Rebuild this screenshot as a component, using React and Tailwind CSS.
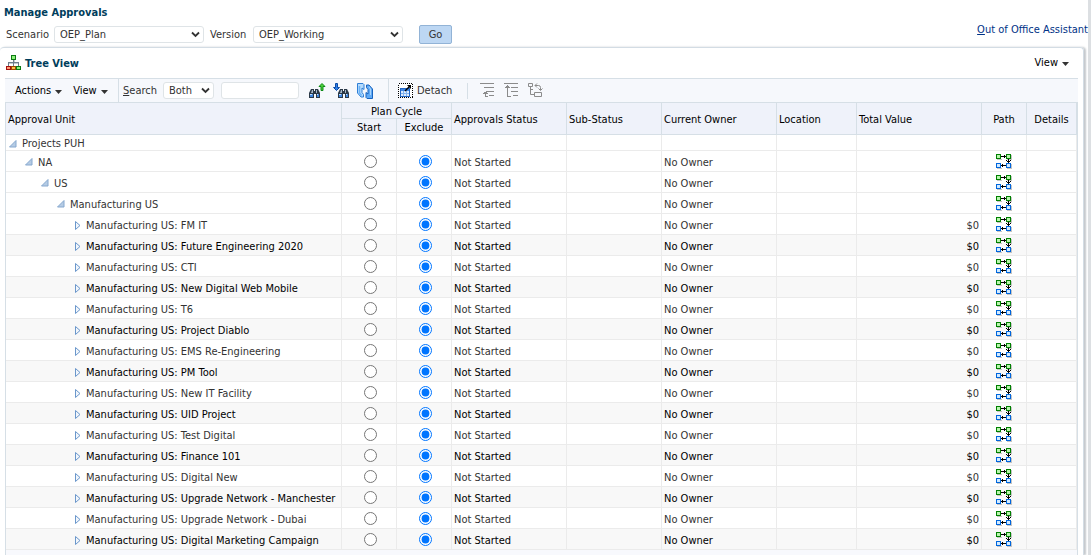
import React, { useState } from 'react'

const columns = [
  { label: 'Approvals Status', width: 'w-[115px]' },
  { label: 'Sub-Status', width: 'w-[95px]' },
  { label: 'Current Owner', width: 'w-[115px]' },
  { label: 'Location', width: 'w-[80px]' },
  { label: 'Total Value', width: 'w-[125px]' },
]

const units = [
  { name: 'Projects PUH', level: 0 },
  { name: 'NA', level: 1 },
  { name: 'US', level: 2 },
  { name: 'Manufacturing US', level: 3 },
  { name: 'Manufacturing US: FM IT', level: 4 },
  { name: 'Manufacturing US: Future Engineering 2020', level: 4 },
  { name: 'Manufacturing US: CTI', level: 4 },
  { name: 'Manufacturing US: New Digital Web Mobile', level: 4 },
  { name: 'Manufacturing US: T6', level: 4 },
  { name: 'Manufacturing US: Project Diablo', level: 4 },
  { name: 'Manufacturing US: EMS Re-Engineering', level: 4 },
  { name: 'Manufacturing US: PM Tool', level: 4 },
  { name: 'Manufacturing US: New IT Facility', level: 4 },
  { name: 'Manufacturing US: UID Project', level: 4 },
  { name: 'Manufacturing US: Test Digital', level: 4 },
  { name: 'Manufacturing US: Finance 101', level: 4 },
  { name: 'Manufacturing US: Digital New', level: 4 },
  { name: 'Manufacturing US: Upgrade Network - Manchester', level: 4 },
  { name: 'Manufacturing US: Upgrade Network - Dubai', level: 4 },
  { name: 'Manufacturing US: Digital Marketing Campaign', level: 4 },
]

const indents = ['pl-[3px]', 'pl-[19px]', 'pl-[35px]', 'pl-[51px]', 'pl-[67px]']

const TreeIcon = () => (
  <svg width="15" height="16" viewBox="0 0 15 16" shapeRendering="crispEdges" aria-hidden="true">
    <path d="M7 5h1v6H7zM2 7h11v1H2zM2 8h1v3H2zM12 8h1v3h-1z" fill="#6d7d8b" />
    <path d="M8 5h1v2H8zM3 8h4v1H3zM8 8h4v1H8z" fill="#c3cad0" />
    <path d="M5 0h5v5H5z" fill="#0b7a12" />
    <path d="M6 1h3v3H6z" fill="#8df07a" />
    <path d="M0 11h5v4H0z" fill="#a30f0f" />
    <path d="M1 12h3v2H1z" fill="#ff9a6e" />
    <path d="M5 11h5v4H5z" fill="#9a4b00" />
    <path d="M6 12h3v2H6z" fill="#ffc04d" />
    <path d="M10 11h5v4h-5z" fill="#0b7a12" />
    <path d="M11 12h3v2h-3z" fill="#8df07a" />
  </svg>
)

const Binoculars = () => (
  <g>
    <path d="M2 6h3v2h1V6h3l2 4v5H7v-4H5v4H0v-5z" fill="#2b3948" />
    <path d="M3 7h1v3H2zM7 7h1v3H7z" fill="#a9b9c9" />
    <path d="M1 11h3v3H1zM8 11h2v3H8z" fill="#3f86e0" />
    <path d="M1 11h2v1H1zM8 11h1v1H8z" fill="#bfe0ff" />
  </g>
)

const FindPreviousIcon = () => (
  <svg width="17" height="16" viewBox="0 0 17 16" aria-hidden="true">
    <Binoculars />
    <path d="M13 0.500l3 3h-2v4h-2v-4h-2z" fill="#4ed13a" stroke="#0c8a17" />
  </svg>
)

const FindNextIcon = () => (
  <svg width="17" height="16" viewBox="0 0 17 16" aria-hidden="true">
    <g transform="translate(5 0)">
      <Binoculars />
    </g>
    <path d="M3.500 7.500L0.500 4.500h2v-4h2v4h2z" fill="#2f7fe8" stroke="#0a4aa6" />
  </svg>
)

const RefreshIcon = () => (
  <svg width="16" height="16" viewBox="0 0 16 16" aria-hidden="true">
    <path d="M0.500 0.500h5.500l1 1v5L5 5v4.500l1.500 2v2.500H4L0.500 10z" fill="#b5dbfd" stroke="#2f7fd6" />
    <path d="M2.500 3v7l2 2.500" fill="none" stroke="#6db3f7" strokeWidth="1.500" />
    <path d="M15.500 15.500H10l-1-1v-5l2 1.500V6.500l-1.500-2V2H12l3.500 4z" fill="#5fa9f5" stroke="#1763bf" />
    <path d="M12 3.500l1.500 2.500v6" fill="none" stroke="#a9d4fc" />
  </svg>
)

const DetachIcon = () => (
  <svg width="15" height="15" viewBox="0 0 15 15" aria-hidden="true">
    <rect x="0.500" y="0.500" width="14" height="14" fill="#fff" stroke="#000" strokeDasharray="1 1" shapeRendering="crispEdges" />
    <rect x="2.500" y="5.500" width="9" height="8" fill="#dcebfd" stroke="#2266c4" />
    <path d="M3 6h8v2H3z" fill="#3d86e6" />
    <path d="M5.500 8v5M8.500 8v5M3 10.500h8" stroke="#7fb2f0" />
    <path d="M7 8l5-5" stroke="#000" strokeWidth="1.500" />
    <path d="M9 2h4v4z" fill="#000" />
  </svg>
)

const GoUpIcon = () => (
  <svg width="15" height="15" viewBox="0 0 15 15" fill="none" stroke="#8b8b8b" shapeRendering="crispEdges" aria-hidden="true">
    <path d="M0 0.500h14M4 4.500h10M6 8.500h8M9 12.500h5M5.500 9v5M5 13.500h3" />
    <path d="M3 10.500h5M4 9.500h3" />
  </svg>
)

const GoToTopIcon = () => (
  <svg width="15" height="15" viewBox="0 0 15 15" fill="none" stroke="#8b8b8b" shapeRendering="crispEdges" aria-hidden="true">
    <path d="M0 0.500h14M7 4.500h7M7 8.500h7M9 12.500h5M3.500 2v12M3 13.500h4" />
    <path d="M1 4.500h5M2 3.500h3" />
  </svg>
)

const ShowAsTopIcon = () => (
  <svg width="15" height="15" viewBox="0 0 15 15" fill="none" stroke="#8b8b8b" aria-hidden="true">
    <path d="M0.500 0.500h4v3h-4zM6.500 9.500h7v4h-7zM2.500 4v7.500H6M2.500 6.500H5" />
    <path d="M7 2.500h3.500q2 0 2 2V7M9 0.500l-2 2 2 2M10.500 5.500l2 2 2-2" />
  </svg>
)

const PathIcon = () => (
  <svg width="16" height="16" viewBox="0 0 16 16" shapeRendering="crispEdges" aria-hidden="true">
    <path d="M1 5h5v1H1zM11 5h5v1h-5zM15 1h1v4h-1zM1 14h5v1H1zM11 14h5v1h-5zM15 10h1v4h-1z" fill="#c4c4c4" />
    <path d="M0 0h5v5H0zM10 0h5v5h-5z" fill="#008000" />
    <path d="M1 1h3v3H1zM11 1h3v3h-3z" fill="#b9f5ae" />
    <path d="M0 9h5v5H0zM10 9h5v5h-5z" fill="#0066dd" />
    <path d="M1 10h3v3H1zM11 10h3v3h-3z" fill="#d2eaff" />
    <path d="M5 2h5v1H5zM8 1h1v3H8zM12 5h1v4h-1zM11 7h3v1h-3zM10 6h1v1h-1zM14 6h1v1h-1zM5 11h5v1H5zM6 10h1v3H6z" fill="#000" />
  </svg>
)

const ExpandedIcon = () => (
  <svg width="8" height="8" viewBox="0 0 8 8" aria-hidden="true">
    <path d="M7 0.500V7H0.500z" fill="#b5cbe4" stroke="#86a8cf" />
  </svg>
)

const CollapsedIcon = () => (
  <svg width="8" height="9" viewBox="0 0 8 9" aria-hidden="true">
    <path d="M2.500 0.500v8l4.500-4z" fill="#f1f6fc" stroke="#6b97cb" />
  </svg>
)

const MenuButton = ({ children }) => (
  <button type="button" className="flex items-center gap-1 text-black">
    {children}
    <svg width="7" height="4" viewBox="0 0 7 4" className="mt-[2px]" aria-hidden="true">
      <path d="M0 0h7L3.500 4z" fill="#333" />
    </svg>
  </button>
)

const Select = ({ id, label, options, className }) => (
  <div className="relative flex">
    <select
      id={id}
      aria-label={label}
      className={`h-[17px] appearance-none rounded-[3px] border border-[#dfe4e7] bg-white pl-[5px] text-[#333] ${className}`}
    >
      {options.map((option) => (
        <option key={option}>{option}</option>
      ))}
    </select>
    <svg className="pointer-events-none absolute right-1 top-[5px]" width="9" height="7" viewBox="0 0 9 7" aria-hidden="true">
      <path d="M1 1.500l3.500 3.500L8 1.500" fill="none" stroke="#333" strokeWidth="1.800" />
    </svg>
  </div>
)

const headCell = 'border-b border-r border-[#d6dfe6] p-0 pt-[2px] font-normal'
const cell = 'border-b border-r border-[#ebebeb] p-0 pt-[2px]'

const UnitRow = ({ unit, index }) => {
  const [cycle, setCycle] = useState('exclude')
  const [open, setOpen] = useState(unit.level < 4)
  const isRoot = unit.level === 0
  const isShaded = unit.level === 4 && index % 2 === 1

  return (
    <tr className={`${isRoot ? 'h-4' : 'h-[21px]'} ${isShaded ? 'bg-[#f8f8f8] text-black' : 'text-[#333]'}`}>
      <td className={`${cell} ${indents[unit.level]}`}>
        <div className="flex items-center">
          <button type="button" aria-label={`Toggle ${unit.name}`} className="mr-[5px]" onClick={() => setOpen(!open)}>
            {open ? <ExpandedIcon /> : <CollapsedIcon />}
          </button>
          <span className="whitespace-nowrap">{unit.name}</span>
        </div>
      </td>
      {['start', 'exclude'].map((value) => (
        <td key={value} className="border-b border-r border-[#ebebeb] p-0 pl-[2px]">
          {!isRoot && (
            <input
              type="radio"
              name={`cycle-${index}`}
              aria-label={`${value} ${unit.name}`}
              checked={cycle === value}
              onChange={() => setCycle(value)}
              className="mx-auto block size-[13px]"
            />
          )}
        </td>
      ))}
      <td className={`${cell} pl-[2px]`}>{!isRoot && 'Not Started'}</td>
      <td className={cell} />
      <td className={`${cell} pl-[2px]`}>{!isRoot && 'No Owner'}</td>
      <td className={cell} />
      <td className={`${cell} pr-[2px] text-right`}>{unit.level === 4 && '$0'}</td>
      <td className={cell}>
        {!isRoot && (
          <button type="button" aria-label={`Path for ${unit.name}`} className="mx-auto block">
            <PathIcon />
          </button>
        )}
      </td>
      <td className={cell} />
    </tr>
  )
}

const App = () => {
  return (
    <div className="flex min-h-screen flex-col border-r-[3px] border-[#dcdfe2] bg-white font-['DejaVu_Sans_Condensed','Noto_Sans',sans-serif] text-[11px] leading-[14px] text-[#333]">
      <h1 className="px-1 pt-[6px] font-bold text-[#003d5b]">Manage Approvals</h1>

      {/* Scenario and version filters */}
      <div className="flex h-[27px] items-center pl-[6px] pt-[2px]">
        <label htmlFor="scenario" className="w-12">Scenario</label>
        <Select id="scenario" options={['OEP_Plan']} className="w-[150px]" />
        <label htmlFor="version" className="ml-[6px] w-[43px]">Version</label>
        <Select id="version" options={['OEP_Working']} className="w-[150px]" />
        <button type="button" className="ml-4 h-[19px] w-[33px] rounded-[2px] border border-[#92b3d6] bg-[#bdd7f3]">Go</button>
        <a href="#assistant" className="mb-[10px] ml-auto text-[#003286]">
          <span className="underline">O</span>ut of Office Assistant
        </a>
      </div>

      {/* Tree view panel */}
      <section className="mr-1 flex grow flex-col rounded-t border-r border-t border-[#d3dce4] pl-[5px] pr-[5px] shadow-[2px_0_2px_#c4c8cc]">
        <div className="flex h-[30px] items-center gap-1 pl-px">
          <TreeIcon />
          <h2 className="pt-[2px] font-bold text-[#003d5b]">Tree View</h2>
          <div className="ml-auto mr-[9px]">
            <MenuButton>View</MenuButton>
          </div>
        </div>

        <div className="flex h-6 items-center border-t border-[#d6dfe6] bg-[#f6f8fc]">
          <div className="flex w-[113px] gap-[11px] pl-[10px]">
            <MenuButton>Actions</MenuButton>
            <MenuButton>View</MenuButton>
          </div>
          <div className="flex h-full items-center border-l border-[#d6dfe6] pl-1">
            <label htmlFor="search" className="w-10"><span className="underline">S</span>earch</label>
            <Select label="Search in" options={['Both']} className="w-[51px]" />
            <input id="search" type="text" className="ml-[7px] h-[17px] w-[78px] rounded-[3px] border border-[#dfe4e7] bg-white px-1" />
            <button type="button" aria-label="Find previous" className="ml-[10px]"><FindPreviousIcon /></button>
            <button type="button" aria-label="Find next" className="ml-[7px]"><FindNextIcon /></button>
            <button type="button" aria-label="Refresh" className="ml-[7px]"><RefreshIcon /></button>
          </div>
          <div className="ml-[15px] flex h-full items-center border-l border-[#d6dfe6] pl-[9px]">
            <button type="button" className="flex items-center gap-1"><DetachIcon />Detach</button>
            <div className="ml-[15px] flex h-4 items-center gap-[9px] border-l border-[#d6dfe6] pl-3">
              <button type="button" aria-label="Go up"><GoUpIcon /></button>
              <button type="button" aria-label="Go to top"><GoToTopIcon /></button>
              <button type="button" aria-label="Show as top"><ShowAsTopIcon /></button>
            </div>
          </div>
        </div>

        <div className="grow border border-b-0 border-[#d6dfe6] bg-[#f8f9fd]">
          <table className="w-full table-fixed border-separate border-spacing-0 bg-white leading-[13px]">
            <colgroup>
              <col />
              <col className="w-[55px]" />
              <col className="w-[55px]" />
              {columns.map((column) => (
                <col key={column.label} className={column.width} />
              ))}
              <col className="w-[45px]" />
              <col className="w-[50px]" />
            </colgroup>
            <thead className="bg-[#eff2fa] text-black">
              <tr className="h-4">
                <th rowSpan={2} className={`${headCell} pl-[2px] text-left`}>Approval Unit</th>
                <th colSpan={2} className={headCell}>Plan Cycle</th>
                {columns.map((column) => (
                  <th key={column.label} rowSpan={2} className={`${headCell} whitespace-nowrap pl-[2px] text-left`}>{column.label}</th>
                ))}
                <th rowSpan={2} className={headCell}>Path</th>
                <th rowSpan={2} className={headCell}>Details</th>
              </tr>
              <tr className="h-4">
                <th className={headCell}>Start</th>
                <th className={headCell}>Exclude</th>
              </tr>
            </thead>
            <tbody>
              {units.map((unit, index) => (
                <UnitRow key={unit.name} unit={unit} index={index} />
              ))}
            </tbody>
          </table>
        </div>
      </section>
    </div>
  )
}

export default App
